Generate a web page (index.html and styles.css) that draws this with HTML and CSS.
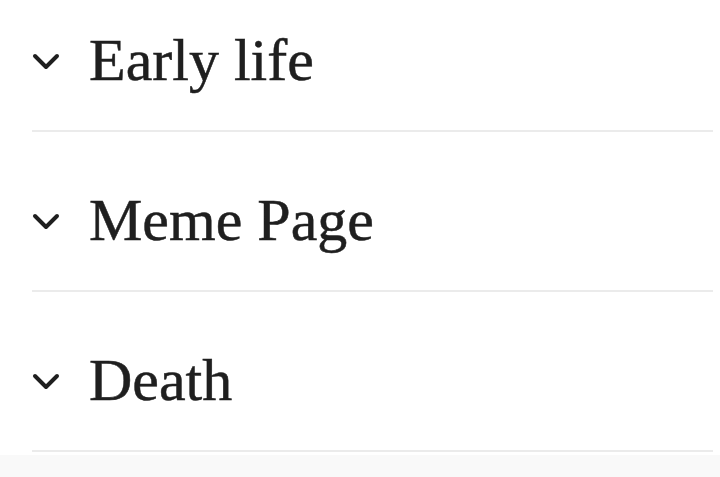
FILE: index.html
```html
<!DOCTYPE html>
<html lang="en">
<head>
  <meta charset="UTF-8">
  <title>Sections</title>
  <link rel="stylesheet" href="styles.css">
</head>
<body>
  <main class="sections">
    <section class="section">
      <h2 class="section-heading">
        <span class="chevron">
          <svg width="28" height="18" viewBox="0 0 28 18"><polyline points="3,3 14,14 25,3"/></svg>
        </span>
        <span class="section-title">Early life</span>
      </h2>
    </section>
    <section class="section">
      <h2 class="section-heading">
        <span class="chevron">
          <svg width="28" height="18" viewBox="0 0 28 18"><polyline points="3,3 14,14 25,3"/></svg>
        </span>
        <span class="section-title">Meme Page</span>
      </h2>
    </section>
    <section class="section">
      <h2 class="section-heading">
        <span class="chevron">
          <svg width="28" height="18" viewBox="0 0 28 18"><polyline points="3,3 14,14 25,3"/></svg>
        </span>
        <span class="section-title">Death</span>
      </h2>
    </section>
  </main>
  <div class="page-bottom"></div>
</body>
</html>
```

FILE: styles.css
```css
:root {
  --text-color: #1f1f1f;
  --divider: #ebebeb;
  --bottom-bg: #f9f9f9;
}

* {
  margin: 0;
  padding: 0;
  box-sizing: border-box;
}

html {
  background: var(--bottom-bg);
}

body {
  min-height: 100vh;
  display: flex;
  flex-direction: column;
  font-family: "Liberation Serif", "Times New Roman", serif;
  color: var(--text-color);
}

.sections {
  background: #fff;
  padding: 0 7px 3px 32px;
}

.section {
  border-bottom: 2px solid var(--divider);
  padding: 53px 0 35px;
}
.section:first-child {
  padding-top: 25px;
}

.section-heading {
  display: flex;
  align-items: center;
  gap: 29px;
  font-size: 60px;
  font-weight: normal;
  line-height: 70px;
  -webkit-text-stroke: 0.5px var(--text-color);
}

.chevron {
  display: flex;
  margin-top: 4px;
}
.chevron svg polyline {
  fill: none;
  stroke: var(--text-color);
  stroke-width: 4;
  stroke-linecap: round;
  stroke-linejoin: round;
}

.page-bottom {
  flex: 1;
  background: var(--bottom-bg);
}
```
